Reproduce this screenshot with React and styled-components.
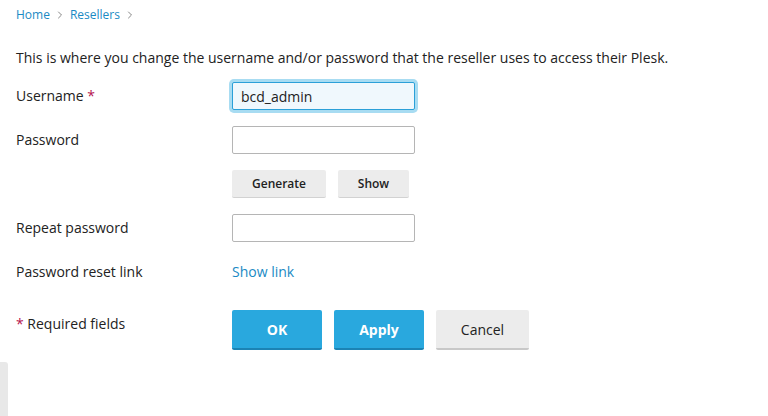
import styled, { createGlobalStyle } from "styled-components";
import { ChevronRight } from "lucide-react";

const Global = createGlobalStyle`
  body {
    margin: 0;
    background: #fff;
    font-family: "Open Sans", "DejaVu Sans", sans-serif;
    font-size: 14px;
    color: #222;
  }
`;

const Page = styled.div`
  position: relative;
  height: 416px;
  padding: 7px 16px 0;
  box-sizing: border-box;
  overflow: hidden;
`;

const Crumbs = styled.nav`
  display: flex;
  align-items: center;
  gap: 4px;
  font-size: 12px;
  line-height: 16px;
  color: #888;
`;

const CrumbLink = styled.a`
  color: #1a8ac4;
  text-decoration: none;
`;

const Intro = styled.p`
  margin: 25px 0 14px;
  line-height: 20px;
`;

const Form = styled.div`
  display: grid;
  grid-template-columns: 216px 1fr;
  grid-auto-rows: minmax(28px, auto);
  row-gap: 16px;
  align-items: center;
`;

const Label = styled.div`
  line-height: 20px;
`;

const Req = styled.span`
  color: #b5134f;
`;

const Field = styled.div`
  display: flex;
  align-items: center;
  gap: 12px;
`;

const Input = styled.input`
  box-sizing: border-box;
  width: 183px;
  height: 28px;
  padding: 0 8px;
  font: inherit;
  color: #222;
  background: ${({ $focused }) => ($focused ? "#f0f8fd" : "#fff")};
  border: 1px solid ${({ $focused }) => ($focused ? "#2ba0d8" : "#b5b5b5")};
  border-radius: 2px;
  box-shadow: ${({ $focused }) => ($focused ? "0 0 0 3px #a8dcf2" : "none")};
  outline: none;
`;

const SmallBtn = styled.button`
  box-sizing: border-box;
  width: ${({ $w }) => $w}px;
  height: 28px;
  padding: 0;
  font-family: inherit;
  font-size: 12px;
  font-weight: 600;
  color: #222;
  background: #ececec;
  border: none;
  border-bottom: 1px solid #d2d2d2;
  border-radius: 2px;
`;

const Link = styled.a`
  color: #1a8ac4;
  text-decoration: none;
  line-height: 20px;
`;

const Footer = styled.div`
  display: grid;
  grid-template-columns: 216px 1fr;
  align-items: start;
  margin-top: 24px;
`;

const FooterNote = styled.div`
  line-height: 20px;
  padding-top: 4px;
`;

const Actions = styled.div`
  display: flex;
  gap: 12px;
`;

const Btn = styled.button`
  box-sizing: border-box;
  width: ${({ $w }) => $w}px;
  height: 40px;
  font-family: inherit;
  font-size: 14px;
  font-weight: ${({ $primary }) => ($primary ? 700 : 500)};
  color: ${({ $primary }) => ($primary ? "#fff" : "#222")};
  background: ${({ $primary }) => ($primary ? "#29a8de" : "#ececec")};
  border: none;
  border-bottom: 2px solid ${({ $primary }) => ($primary ? "#1b83b4" : "#c8c8c8")};
  border-radius: 2px;
`;

const SideTab = styled.div`
  position: absolute;
  left: 0;
  bottom: 0;
  width: 8px;
  height: 54px;
  background: #e8e8e8;
  border-top-right-radius: 3px;
`;

export default function App() {
  return (
    <Page>
      <Global />
      <Crumbs>
        <CrumbLink href="#">Home</CrumbLink>
        <ChevronRight size={12} strokeWidth={2} />
        <CrumbLink href="#">Resellers</CrumbLink>
        <ChevronRight size={12} strokeWidth={2} />
      </Crumbs>
      <Intro>
        This is where you change the username and/or password that the reseller uses to access their Plesk.
      </Intro>
      <Form>
        <Label>
          Username <Req>*</Req>
        </Label>
        <Field>
          <Input $focused defaultValue="bcd_admin" />
        </Field>
        <Label>Password</Label>
        <Field>
          <Input type="password" />
        </Field>
        <div />
        <Field>
          <SmallBtn $w={94}>Generate</SmallBtn>
          <SmallBtn $w={71}>Show</SmallBtn>
        </Field>
        <Label>Repeat password</Label>
        <Field>
          <Input type="password" />
        </Field>
        <Label>Password reset link</Label>
        <Field>
          <Link href="#">Show link</Link>
        </Field>
      </Form>
      <Footer>
        <FooterNote>
          <Req>*</Req> Required fields
        </FooterNote>
        <Actions>
          <Btn $primary $w={90}>OK</Btn>
          <Btn $primary $w={90}>Apply</Btn>
          <Btn $w={93}>Cancel</Btn>
        </Actions>
      </Footer>
      <SideTab />
    </Page>
  );
}
